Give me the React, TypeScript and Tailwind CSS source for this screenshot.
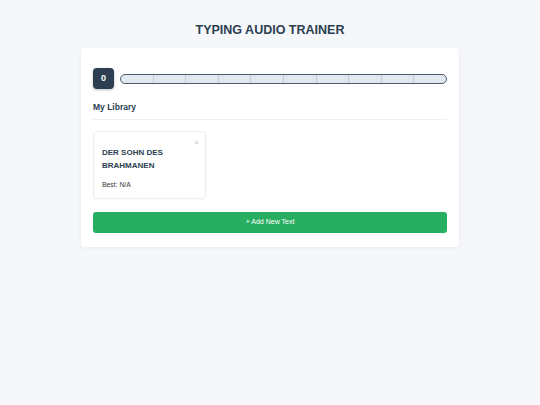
import { useState } from "react";

type Text = { id: number; title: string; best: string };

const initialTexts: Text[] = [
  { id: 1, title: "DER SOHN DES BRAHMANEN", best: "N/A" },
];

export default function App() {
  const [texts, setTexts] = useState<Text[]>(initialTexts);
  const progress = 0;
  const segments = Array.from({ length: 10 }, (_, i) => i);

  return (
    <div className="min-h-screen bg-[#f5f7fa] pt-[21px] font-['Liberation_Sans',Arial,sans-serif]">
      <h1 className="text-center text-[12.5px] font-bold leading-[18px] text-[#2c3e50]">
        TYPING AUDIO TRAINER
      </h1>

      <div className="mx-auto mt-[9px] w-[378px] rounded-[4px] bg-white px-3 pt-[20px] pb-[14px] shadow-[0_1px_4px_rgba(0,0,0,0.06)]">
        <div className="flex items-center gap-[6px]">
          <div className="flex h-[21px] w-[21px] shrink-0 items-center justify-center rounded-[4px] bg-[#2c3e50] text-[9px] font-bold text-white shadow-[0_1px_3px_rgba(0,0,0,0.25)]">
            {progress}
          </div>
          <div className="flex h-[10px] flex-1 overflow-hidden rounded-full border-[1.5px] border-[#4f5b6c] bg-[#e2e8f0]">
            {segments.map((i) => (
              <div
                key={i}
                className="flex-1 border-r border-[#c3ccd8] last:border-r-0"
              />
            ))}
          </div>
        </div>

        <h2 className="mt-[12px] border-b border-[#eef0f3] pb-[6px] text-[8.5px] font-bold leading-[12px] text-[#2c3e50]">
          My Library
        </h2>

        <div className="mt-[11px] grid grid-cols-3 gap-[8px]">
          {texts.map((t) => (
            <div
              key={t.id}
              className="relative h-[68px] rounded-[4px] border border-[#eceef1] bg-white px-[8px] pt-[14px] shadow-[0_1px_2px_rgba(0,0,0,0.03)]"
            >
              <button
                onClick={() => setTexts((prev) => prev.filter((x) => x.id !== t.id))}
                className="absolute right-[6px] top-[7px] text-[7px] leading-none text-[#c0c4ca]"
              >
                ×
              </button>
              <h3 className="text-[8px] font-bold leading-[13px] text-[#2c3e50]">
                {t.title}
              </h3>
              <p className="mt-[8px] text-[6.8px] leading-[10px] text-[#333]">
                Best: {t.best}
              </p>
            </div>
          ))}
        </div>

        <button className="mt-[13px] flex h-[21px] w-full items-center justify-center rounded-[3px] bg-[#27ae60] text-[7px] text-white">
          + Add New Text
        </button>
      </div>
    </div>
  );
}
